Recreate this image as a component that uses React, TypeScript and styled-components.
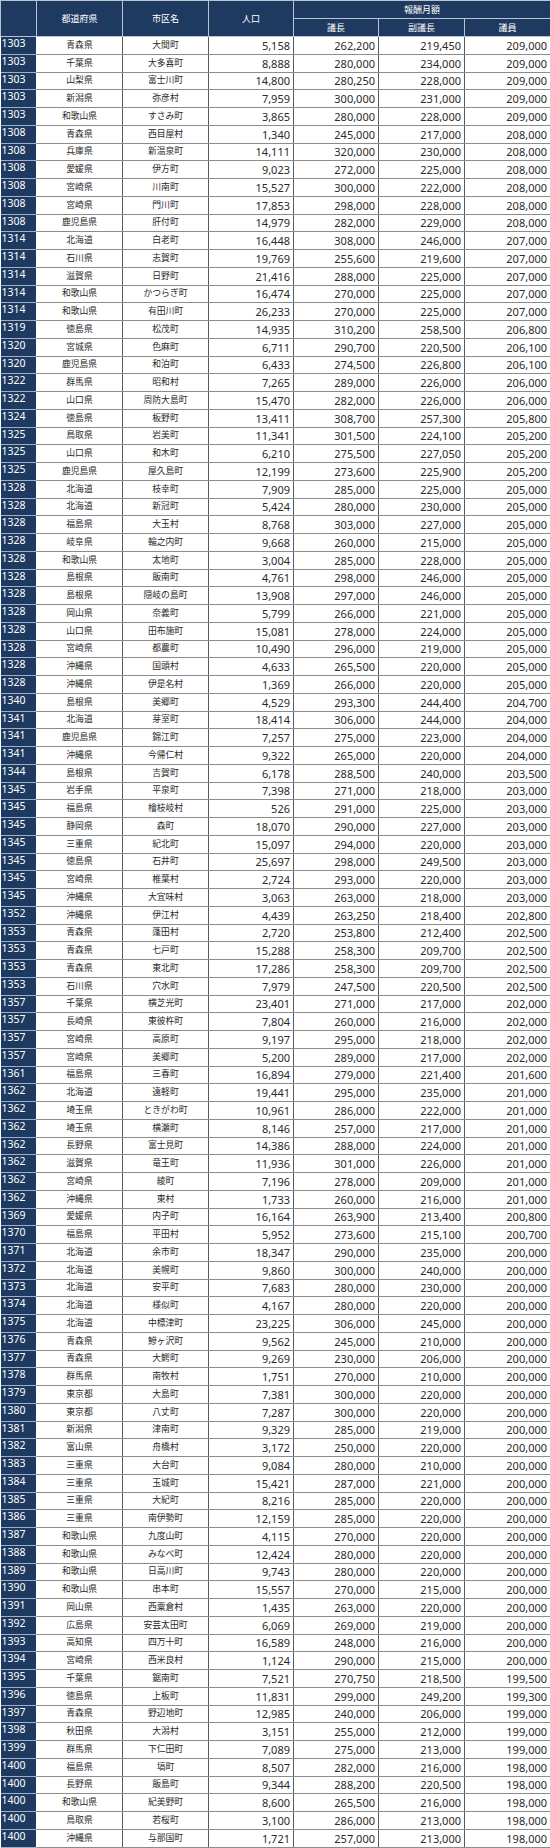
import React from "react";
import styled, { createGlobalStyle } from "styled-components";

const GlobalStyle = createGlobalStyle`
  html, body {
    margin: 0;
    padding: 0;
    background: #ffffff;
  }
  body {
    font-family: "Noto Sans CJK JP", "Noto Sans", sans-serif;
  }
`;

const NAVY = "#1f3a60";

const Table = styled.table`
  width: 550px;
  height: 1848px;
  border-collapse: collapse;
  table-layout: fixed;
`;

const HeadCell = styled.th`
  background: ${NAVY};
  color: #ffffff;
  font-weight: 400;
  font-size: 9px;
  padding: 0;
  border: 1px solid #b9c3d1;
  text-align: center;
  vertical-align: middle;
  line-height: 1;
`;

const HeadRow = styled.tr`
  height: 18px;
`;

const Row = styled.tr`
  height: 17.76px;
`;

const RankCell = styled.td`
  background: ${NAVY};
  color: #ffffff;
  font-family: "Noto Sans", sans-serif;
  font-size: 10.5px;
  line-height: 1;
  padding: 1px 0 0 1px;
  vertical-align: top;
  border-top: 1px solid #9fb0c6;
  border-bottom: 1px solid #9fb0c6;
  border-right: 1px solid #ffffff;
`;

const Cell = styled.td<{ $num?: boolean }>`
  padding: 0 ${(p) => (p.$num ? "3px" : "0")} 0 0;
  border-top: 1px solid #8c8c8c;
  border-bottom: 1px solid #8c8c8c;
  border-left: 1px solid #5a5a5a;
  border-right: 1px solid #5a5a5a;
  color: #2a2a2a;
  text-align: ${(p) => (p.$num ? "right" : "center")};
  vertical-align: middle;
  line-height: 1;
  font-size: ${(p) => (p.$num ? "11px" : "8.8px")};
  font-family: ${(p) =>
    p.$num ? `"Noto Sans", sans-serif` : `"Noto Sans CJK JP", sans-serif`};
  white-space: nowrap;
  overflow: hidden;
`;

const raw = `1303 青森県 大間町 5,158 262,200 219,450 209,000
1303 千葉県 大多喜町 8,888 280,000 234,000 209,000
1303 山梨県 富士川町 14,800 280,250 228,000 209,000
1303 新潟県 弥彦村 7,959 300,000 231,000 209,000
1303 和歌山県 すさみ町 3,865 280,000 228,000 209,000
1308 青森県 西目屋村 1,340 245,000 217,000 208,000
1308 兵庫県 新温泉町 14,111 320,000 230,000 208,000
1308 愛媛県 伊方町 9,023 272,000 225,000 208,000
1308 宮崎県 川南町 15,527 300,000 222,000 208,000
1308 宮崎県 門川町 17,853 298,000 228,000 208,000
1308 鹿児島県 肝付町 14,979 282,000 229,000 208,000
1314 北海道 白老町 16,448 308,000 246,000 207,000
1314 石川県 志賀町 19,769 255,600 219,600 207,000
1314 滋賀県 日野町 21,416 288,000 225,000 207,000
1314 和歌山県 かつらぎ町 16,474 270,000 225,000 207,000
1314 和歌山県 有田川町 26,233 270,000 225,000 207,000
1319 徳島県 松茂町 14,935 310,200 258,500 206,800
1320 宮城県 色麻町 6,711 290,700 220,500 206,100
1320 鹿児島県 和泊町 6,433 274,500 226,800 206,100
1322 群馬県 昭和村 7,265 289,000 226,000 206,000
1322 山口県 周防大島町 15,470 282,000 226,000 206,000
1324 徳島県 板野町 13,411 308,700 257,300 205,800
1325 鳥取県 岩美町 11,341 301,500 224,100 205,200
1325 山口県 和木町 6,210 275,500 227,050 205,200
1325 鹿児島県 屋久島町 12,199 273,600 225,900 205,200
1328 北海道 枝幸町 7,909 285,000 225,000 205,000
1328 北海道 新冠町 5,424 280,000 230,000 205,000
1328 福島県 大玉村 8,768 303,000 227,000 205,000
1328 岐阜県 輪之内町 9,668 260,000 215,000 205,000
1328 和歌山県 太地町 3,004 285,000 228,000 205,000
1328 島根県 飯南町 4,761 298,000 246,000 205,000
1328 島根県 隠岐の島町 13,908 297,000 246,000 205,000
1328 岡山県 奈義町 5,799 266,000 221,000 205,000
1328 山口県 田布施町 15,081 278,000 224,000 205,000
1328 宮崎県 都農町 10,490 296,000 219,000 205,000
1328 沖縄県 国頭村 4,633 265,500 220,000 205,000
1328 沖縄県 伊是名村 1,369 266,000 220,000 205,000
1340 島根県 美郷町 4,529 293,300 244,400 204,700
1341 北海道 芽室町 18,414 306,000 244,000 204,000
1341 鹿児島県 錦江町 7,257 275,000 223,000 204,000
1341 沖縄県 今帰仁村 9,322 265,000 220,000 204,000
1344 島根県 吉賀町 6,178 288,500 240,000 203,500
1345 岩手県 平泉町 7,398 271,000 218,000 203,000
1345 福島県 檜枝岐村 526 291,000 225,000 203,000
1345 静岡県 森町 18,070 290,000 227,000 203,000
1345 三重県 紀北町 15,097 294,000 220,000 203,000
1345 徳島県 石井町 25,697 298,000 249,500 203,000
1345 宮崎県 椎葉村 2,724 293,000 220,000 203,000
1345 沖縄県 大宜味村 3,063 263,000 218,000 203,000
1352 沖縄県 伊江村 4,439 263,250 218,400 202,800
1353 青森県 蓬田村 2,720 253,800 212,400 202,500
1353 青森県 七戸町 15,288 258,300 209,700 202,500
1353 青森県 東北町 17,286 258,300 209,700 202,500
1353 石川県 穴水町 7,979 247,500 220,500 202,500
1357 千葉県 横芝光町 23,401 271,000 217,000 202,000
1357 長崎県 東彼杵町 7,804 260,000 216,000 202,000
1357 宮崎県 高原町 9,197 295,000 218,000 202,000
1357 宮崎県 美郷町 5,200 289,000 217,000 202,000
1361 福島県 三春町 16,894 279,000 221,400 201,600
1362 北海道 遠軽町 19,441 295,000 235,000 201,000
1362 埼玉県 ときがわ町 10,961 286,000 222,000 201,000
1362 埼玉県 横瀬町 8,146 257,000 217,000 201,000
1362 長野県 富士見町 14,386 288,000 224,000 201,000
1362 滋賀県 竜王町 11,936 301,000 226,000 201,000
1362 宮崎県 綾町 7,196 278,000 209,000 201,000
1362 沖縄県 東村 1,733 260,000 216,000 201,000
1369 愛媛県 内子町 16,164 263,900 213,400 200,800
1370 福島県 平田村 5,952 273,600 215,100 200,700
1371 北海道 余市町 18,347 290,000 235,000 200,000
1372 北海道 美幌町 9,860 300,000 240,000 200,000
1373 北海道 安平町 7,683 280,000 230,000 200,000
1374 北海道 様似町 4,167 280,000 220,000 200,000
1375 北海道 中標津町 23,225 306,000 245,000 200,000
1376 青森県 鰺ヶ沢町 9,562 245,000 210,000 200,000
1377 青森県 大鰐町 9,269 230,000 206,000 200,000
1378 群馬県 南牧村 1,751 270,000 210,000 200,000
1379 東京都 大島町 7,381 300,000 220,000 200,000
1380 東京都 八丈町 7,287 300,000 220,000 200,000
1381 新潟県 津南町 9,329 285,000 219,000 200,000
1382 富山県 舟橋村 3,172 250,000 220,000 200,000
1383 三重県 大台町 9,084 280,000 210,000 200,000
1384 三重県 玉城町 15,421 287,000 221,000 200,000
1385 三重県 大紀町 8,216 285,000 220,000 200,000
1386 三重県 南伊勢町 12,159 285,000 220,000 200,000
1387 和歌山県 九度山町 4,115 270,000 220,000 200,000
1388 和歌山県 みなべ町 12,424 280,000 220,000 200,000
1389 和歌山県 日高川町 9,743 280,000 220,000 200,000
1390 和歌山県 串本町 15,557 270,000 215,000 200,000
1391 岡山県 西粟倉村 1,435 263,000 220,000 200,000
1392 広島県 安芸太田町 6,069 269,000 219,000 200,000
1393 高知県 四万十町 16,589 248,000 216,000 200,000
1394 宮崎県 西米良村 1,124 290,000 215,000 200,000
1395 千葉県 鋸南町 7,521 270,750 218,500 199,500
1396 徳島県 上板町 11,831 299,000 249,200 199,300
1397 青森県 野辺地町 12,985 240,000 206,000 199,000
1398 秋田県 大潟村 3,151 255,000 212,000 199,000
1399 群馬県 下仁田町 7,089 275,000 213,000 199,000
1400 福島県 塙町 8,507 282,000 216,000 198,000
1400 長野県 飯島町 9,344 288,200 220,500 198,000
1400 和歌山県 紀美野町 8,600 265,500 216,000 198,000
1400 鳥取県 若桜町 3,100 286,000 213,000 198,000
1400 沖縄県 与那国町 1,721 257,000 213,000 198,000`;

const rows = raw.split("\n").map((line) => line.split(" "));

const widths = [36, 86, 86, 85, 85, 86, 86];

function App() {
  return (
    <>
      <GlobalStyle />
      <Table>
        <colgroup>
          {widths.map((w, i) => (
            <col key={i} style={{ width: w }} />
          ))}
        </colgroup>
        <thead>
          <HeadRow>
            <HeadCell rowSpan={2}></HeadCell>
            <HeadCell rowSpan={2}>都道府県</HeadCell>
            <HeadCell rowSpan={2}>市区名</HeadCell>
            <HeadCell rowSpan={2}>人口</HeadCell>
            <HeadCell colSpan={3}>報酬月額</HeadCell>
          </HeadRow>
          <HeadRow>
            <HeadCell>議長</HeadCell>
            <HeadCell>副議長</HeadCell>
            <HeadCell>議員</HeadCell>
          </HeadRow>
        </thead>
        <tbody>
          {rows.map((r, i) => (
            <Row key={i}>
              <RankCell>{r[0]}</RankCell>
              <Cell>{r[1]}</Cell>
              <Cell>{r[2]}</Cell>
              <Cell $num>{r[3]}</Cell>
              <Cell $num>{r[4]}</Cell>
              <Cell $num>{r[5]}</Cell>
              <Cell $num>{r[6]}</Cell>
            </Row>
          ))}
        </tbody>
      </Table>
    </>
  );
}

export default App;
